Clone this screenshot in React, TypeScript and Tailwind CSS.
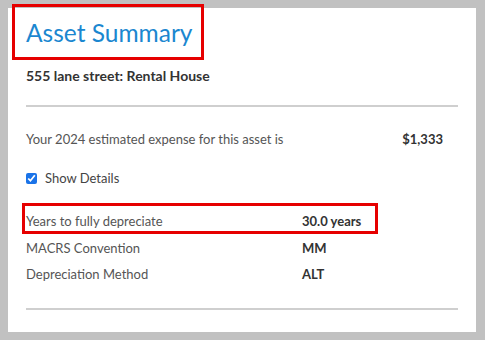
import React from 'react';

const rows = [
  { label: 'MACRS Convention', value: 'MM' },
  { label: 'Depreciation Method', value: 'ALT' },
];

const App: React.FC = () => {
  return (
    <div className="relative w-[485px] h-[340px] bg-[#c1c1c1] p-2 overflow-hidden" style={{ fontFamily: 'Lato, "Noto Sans", sans-serif' }}>
      <div className="bg-white w-[468px] h-[324px] pl-[18px] pr-[18px] pt-[10px]">
        <h1 className="text-[24.5px] leading-[30px] text-[#1b87d0]">Asset Summary</h1>
        <p className="text-[14px] font-bold text-[#333] mt-[19px] leading-[18px]">555 lane street: Rental House</p>
        <div className="h-[2px] bg-[#cfcfcf] mt-[20px]" />

        <div className="flex justify-between items-center mt-[23px] pr-[15px] text-[13px] leading-[18px]">
          <span className="text-[#555]">Your 2024 estimated expense for this asset is</span>
          <span className="font-bold text-[#333]">$1,333</span>
        </div>

        <label className="flex items-center gap-[8px] mt-[21px] text-[13px] leading-[18px] text-[#444]">
          <input type="checkbox" defaultChecked className="w-[11px] h-[11px] accent-[#1a73e8] m-0" />
          <span>Show Details</span>
        </label>

        <div className="mt-[25px] flex flex-col gap-[8px] text-[13px] leading-[18px]">
          <div className="flex mb-[1px]">
            <span className="w-[276px] text-[#555]">Years to fully depreciate</span>
            <span className="font-bold text-[#333]">30.0 years</span>
          </div>
          {rows.map(r => (
            <div key={r.label} className="flex">
              <span className="w-[276px] text-[#555]">{r.label}</span>
              <span className="font-bold text-[#333]">{r.value}</span>
            </div>
          ))}
        </div>

        <div className="h-[2px] bg-[#cfcfcf] mt-[25px]" />
      </div>

      {/* annotation boxes */}
      <div className="absolute left-[12px] top-[4px] w-[192px] h-[56px] border-[3px] border-[#e60000]" />
      <div className="absolute left-[22px] top-[203px] w-[356px] h-[31px] border-[3px] border-[#e60000]" />
    </div>
  );
};

export default App;
